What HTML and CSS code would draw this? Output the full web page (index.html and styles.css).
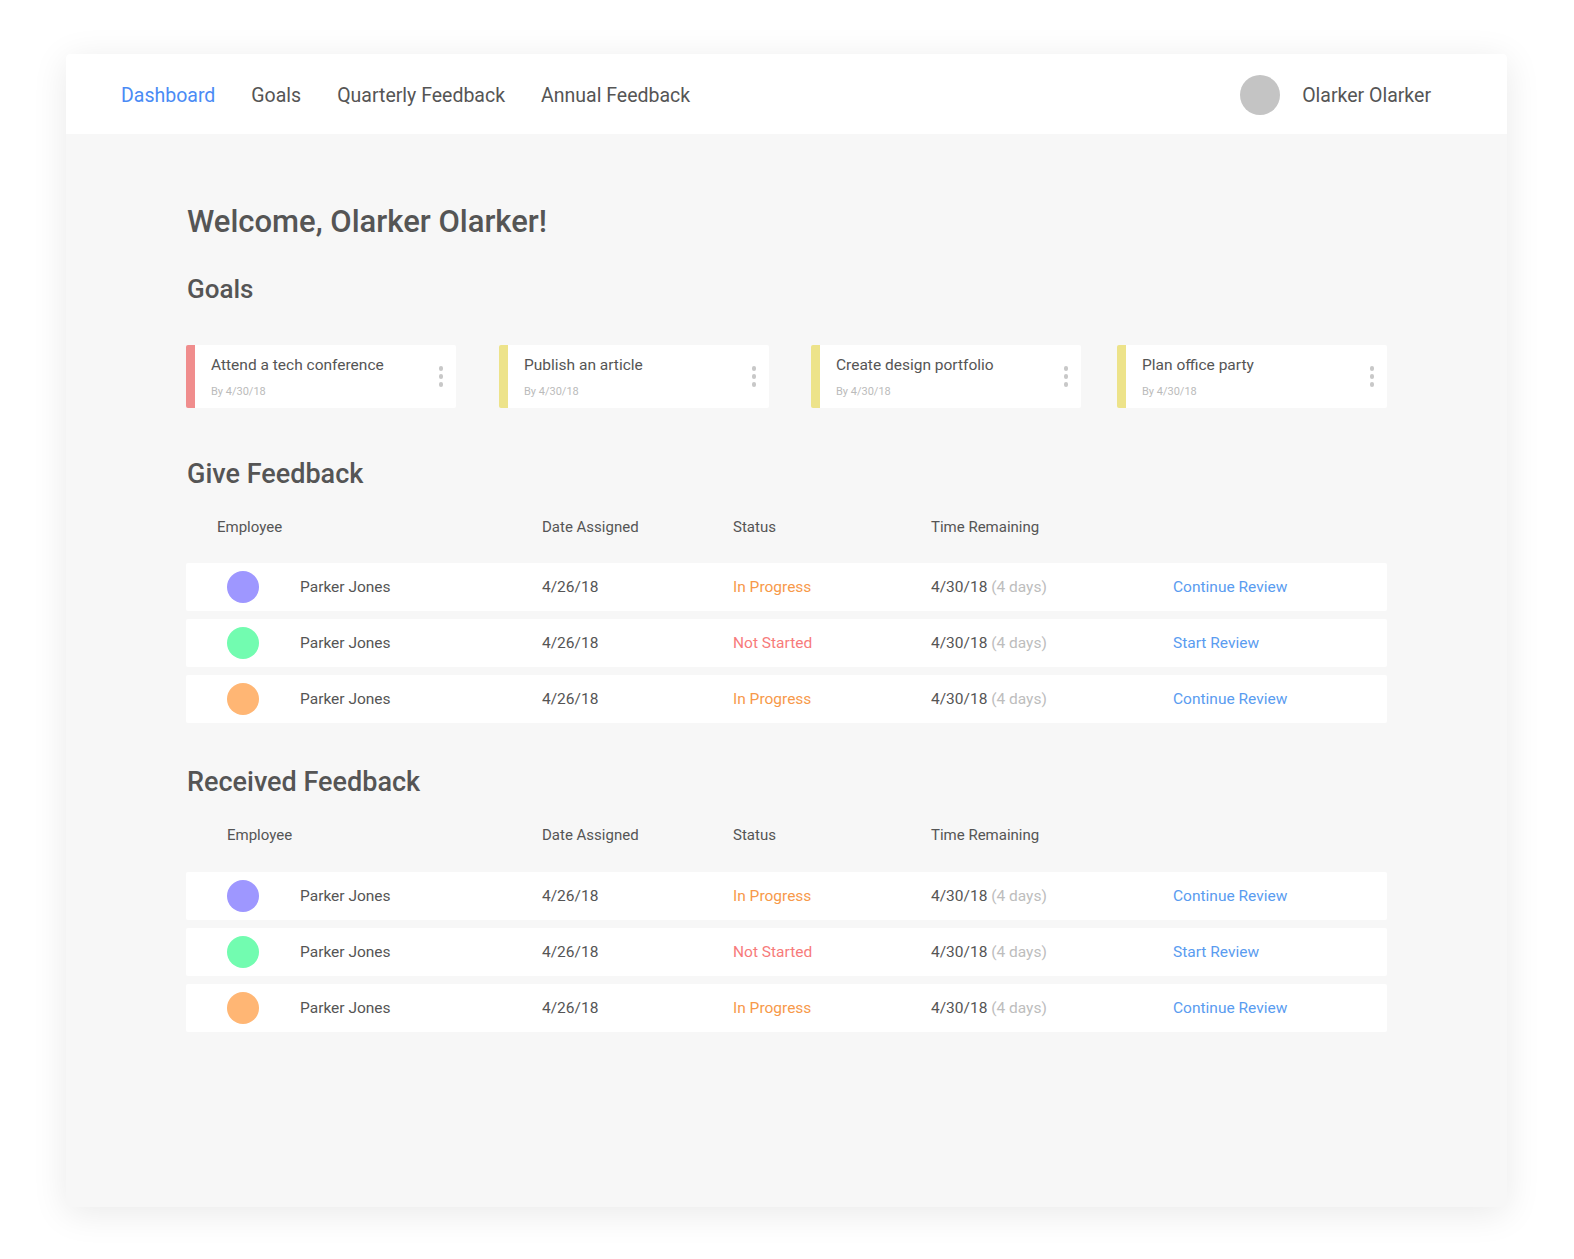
FILE: index.html
```html
<!DOCTYPE html>
<html lang="en">
<head>
<meta charset="utf-8">
<title>Dashboard</title>
<link rel="stylesheet" href="styles.css">
</head>
<body>
<div class="frame">
  <header class="topbar">
    <nav class="nav">
      <a class="nav-link active">Dashboard</a>
      <a class="nav-link">Goals</a>
      <a class="nav-link">Quarterly Feedback</a>
      <a class="nav-link">Annual Feedback</a>
    </nav>
    <div class="user">
      <span class="user-avatar"></span>
      <span class="user-name">Olarker Olarker</span>
    </div>
  </header>

  <main class="content">
    <h1 class="welcome">Welcome, Olarker Olarker!</h1>

    <h2 class="goals-title">Goals</h2>
    <div class="goals">
      <div class="goal goal-red">
        <div class="goal-body">
          <div class="goal-title">Attend a tech conference</div>
          <div class="goal-date">By 4/30/18</div>
        </div>
        <div class="kebab"><i></i><i></i><i></i></div>
      </div>
      <div class="goal goal-yellow">
        <div class="goal-body">
          <div class="goal-title">Publish an article</div>
          <div class="goal-date">By 4/30/18</div>
        </div>
        <div class="kebab"><i></i><i></i><i></i></div>
      </div>
      <div class="goal goal-yellow">
        <div class="goal-body">
          <div class="goal-title">Create design portfolio</div>
          <div class="goal-date">By 4/30/18</div>
        </div>
        <div class="kebab"><i></i><i></i><i></i></div>
      </div>
      <div class="goal goal-yellow">
        <div class="goal-body">
          <div class="goal-title">Plan office party</div>
          <div class="goal-date">By 4/30/18</div>
        </div>
        <div class="kebab"><i></i><i></i><i></i></div>
      </div>
    </div>

    <h2 class="section-title">Give Feedback</h2>
    <div class="table">
      <div class="thead">
        <div class="th th-employee">Employee</div>
        <div class="th">Date Assigned</div>
        <div class="th">Status</div>
        <div class="th">Time Remaining</div>
        <div class="th"></div>
      </div>
      <div class="row">
        <div class="cell emp"><span class="av av-purple"></span>Parker Jones</div>
        <div class="cell">4/26/18</div>
        <div class="cell st-progress">In Progress</div>
        <div class="cell">4/30/18 <span class="muted">(4 days)</span></div>
        <div class="cell action">Continue Review</div>
      </div>
      <div class="row">
        <div class="cell emp"><span class="av av-green"></span>Parker Jones</div>
        <div class="cell">4/26/18</div>
        <div class="cell st-new">Not Started</div>
        <div class="cell">4/30/18 <span class="muted">(4 days)</span></div>
        <div class="cell action">Start Review</div>
      </div>
      <div class="row">
        <div class="cell emp"><span class="av av-orange"></span>Parker Jones</div>
        <div class="cell">4/26/18</div>
        <div class="cell st-progress">In Progress</div>
        <div class="cell">4/30/18 <span class="muted">(4 days)</span></div>
        <div class="cell action">Continue Review</div>
      </div>
    </div>

    <h2 class="section-title section-second">Received Feedback</h2>
    <div class="table">
      <div class="thead">
        <div class="th th-employee th-employee-wide">Employee</div>
        <div class="th">Date Assigned</div>
        <div class="th">Status</div>
        <div class="th">Time Remaining</div>
        <div class="th"></div>
      </div>
      <div class="row">
        <div class="cell emp"><span class="av av-purple"></span>Parker Jones</div>
        <div class="cell">4/26/18</div>
        <div class="cell st-progress">In Progress</div>
        <div class="cell">4/30/18 <span class="muted">(4 days)</span></div>
        <div class="cell action">Continue Review</div>
      </div>
      <div class="row">
        <div class="cell emp"><span class="av av-green"></span>Parker Jones</div>
        <div class="cell">4/26/18</div>
        <div class="cell st-new">Not Started</div>
        <div class="cell">4/30/18 <span class="muted">(4 days)</span></div>
        <div class="cell action">Start Review</div>
      </div>
      <div class="row">
        <div class="cell emp"><span class="av av-orange"></span>Parker Jones</div>
        <div class="cell">4/26/18</div>
        <div class="cell st-progress">In Progress</div>
        <div class="cell">4/30/18 <span class="muted">(4 days)</span></div>
        <div class="cell action">Continue Review</div>
      </div>
    </div>
  </main>
</div>
</body>
</html>
```

FILE: styles.css
```css
* { box-sizing: border-box; }

html, body {
  margin: 0;
  padding: 0;
  background: #ffffff;
}

body {
  font-family: Roboto, "Liberation Sans", sans-serif;
  color: #555555;
  padding: 54px 0 52px 66px;
}

.frame {
  width: 1441px;
  height: 1153px;
  background: #f7f7f7;
  border-radius: 4px;
  box-shadow: 0 6px 36px rgba(0, 0, 0, 0.09);
  overflow: hidden;
}

.topbar {
  height: 80px;
  background: #ffffff;
  display: flex;
  align-items: center;
  justify-content: space-between;
  padding: 2px 76px 0 55px;
}

.nav {
  display: flex;
  gap: 36px;
  padding-top: 2px;
}

.nav-link {
  font-size: 19.5px;
  color: #555555;
  text-decoration: none;
  line-height: 24px;
}

.nav-link.active {
  color: #4a8bf5;
}

.user {
  display: flex;
  align-items: center;
  gap: 22px;
}

.user-avatar {
  width: 40px;
  height: 40px;
  border-radius: 50%;
  background: #c4c4c4;
  display: block;
}

.user-name {
  font-size: 19.5px;
  line-height: 24px;
  padding-top: 2px;
  color: #555555;
}

.content {
  padding: 70px 120px 0 120px;
}

.welcome {
  margin: 0 0 0 1px;
  font-size: 31px;
  line-height: 36px;
  font-weight: 500;
  color: #555555;
}

.goals-title {
  margin: 34px 0 0 1px;
  font-size: 26px;
  line-height: 30px;
  font-weight: 500;
  color: #555555;
}

.goals {
  margin-top: 41px;
  display: flex;
}

.goal {
  width: 270px;
  height: 63px;
  background: #ffffff;
  border-radius: 2px;
  display: flex;
  align-items: center;
  border-left: 9px solid #f08d8d;
}

.goal:nth-child(2) { margin-left: 43px; }
.goal:nth-child(3) { margin-left: 42px; }
.goal:nth-child(4) { margin-left: auto; }

.goal-red { border-left-color: #f08d8d; }
.goal-yellow { border-left-color: #ede38a; }

.goal-body {
  flex: 1;
  align-self: stretch;
  padding: 10px 0 0 16px;
}

.goal-title {
  font-size: 15.5px;
  line-height: 20px;
  color: #555555;
}

.goal-date {
  margin-top: 10px;
  font-size: 11px;
  line-height: 14px;
  color: #bbbbbb;
}

.kebab {
  display: flex;
  flex-direction: column;
  gap: 3.5px;
  margin-right: 13px;
}

.kebab i {
  display: block;
  width: 4.5px;
  height: 4.5px;
  border-radius: 50%;
  background: #c8c8c8;
}

.section-title {
  margin: 51px 0 0 1px;
  font-size: 27px;
  line-height: 30px;
  font-weight: 500;
  color: #555555;
}

.section-second {
  margin-top: 44px;
}

.table {
  margin-top: 28px;
}

.thead,
.row {
  display: grid;
  grid-template-columns: 356px 191px 198px 242px 1fr;
  align-items: center;
}

.thead {
  margin-bottom: 25.5px;
}

.table + .section-title + .table .thead {
  margin-bottom: 27px;
}

.th {
  font-size: 15px;
  line-height: 20px;
  color: #555555;
}

.th-employee {
  padding-left: 31px;
}

.th-employee-wide {
  padding-left: 41px;
}

.row {
  height: 48px;
  background: #ffffff;
  border-radius: 2px;
  margin-bottom: 8px;
}

.cell {
  font-size: 15.5px;
  line-height: 20px;
  color: #555555;
}

.emp {
  display: flex;
  align-items: center;
  padding-left: 41px;
  gap: 41px;
}

.av {
  width: 32px;
  height: 32px;
  border-radius: 50%;
  display: block;
  flex: none;
}

.av-purple { background: #9e97ff; }
.av-green { background: #72fcb0; }
.av-orange { background: #ffb674; }

.st-progress { color: #f7994a; }
.st-new { color: #f77b7b; }

.muted { color: #bdbdbd; }

.action { color: #5a9cf0; }
```
